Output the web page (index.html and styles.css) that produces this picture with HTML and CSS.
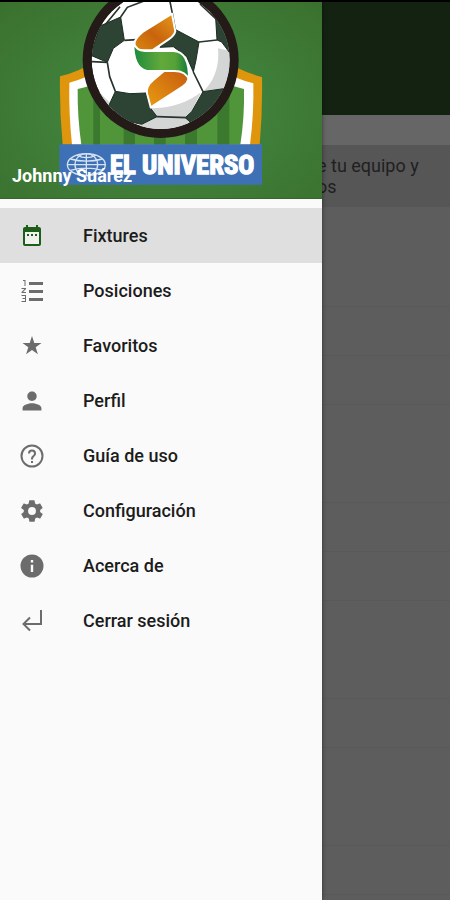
FILE: index.html
```
<!DOCTYPE html>
<html lang="es">
<head>
<meta charset="utf-8">
<meta name="viewport" content="width=device-width, initial-scale=1">
<title>Fixtures</title>
<link rel="stylesheet" href="styles.css">
</head>
<body>
<main class="page">
  <header class="app-bar"></header>
  <div class="tab-strip"></div>
  <p class="notice">e tu equipo y<br>os</p>
  <div class="matches">
    <div class="match"></div>
    <div class="day"></div>
    <div class="day"></div>
    <div class="match"></div>
    <div class="day"></div>
    <div class="day"></div>
    <div class="match"></div>
    <div class="day"></div>
    <div class="match"></div>
    <div class="day"></div>
  </div>
</main>

<aside class="drawer">
  <header class="profile">
    <svg class="crest" viewBox="177 6 612 549" role="img" aria-label="El Universo">
      <defs>
        <clipPath id="ball"><circle cx="482" cy="180" r="207"/></clipPath>
        <linearGradient id="amber" x1="0" y1="1" x2="1" y2="0">
          <stop offset="0" stop-color="#d9880f"/><stop offset=".45" stop-color="#c9640c"/><stop offset="1" stop-color="#e59a1c"/>
        </linearGradient>
        <linearGradient id="amber2" x1="0" y1="1" x2="1" y2="0">
          <stop offset="0" stop-color="#e99d10"/><stop offset="1" stop-color="#c65a10"/>
        </linearGradient>
        <linearGradient id="leaf">
          <stop offset="0" stop-color="#1c8a3e"/><stop offset=".5" stop-color="#62a93a"/><stop offset=".75" stop-color="#55a238"/><stop offset="1" stop-color="#147a3c"/>
        </linearGradient>
      </defs>
      <path fill="#df960d" d="M180 229Q240 215 290 180H675Q724 216 786 231Q788 330 779 434H188Q178 330 180 229Z"/>
      <path fill="#fff" d="M208 248Q255 236 300 210H665Q710 238 760 250Q762 340 750 434H216Q206 340 208 248Z"/>
      <path fill="#50953a" d="M233 267Q270 260 310 240H655Q700 260 732 267Q734 350 721 434H244Q232 350 233 267Z"/>
      <path fill="#3a792e" d="M280 250h20v184h-20zM371 300h34v134h-34zM462 300h35v134h-35zM555 300h36v134h-36zM652 250h36v184h-36z"/>
      <circle cx="482" cy="180" r="234" fill="#241a18"/>
      <g clip-path="url(#ball)">
        <circle cx="482" cy="180" r="207" fill="#fff"/>
        <path fill="#d4d5d5" d="M654 145L700 155L690 265L609 275Q661 225 654 145ZM603 277L565 352L470 350L454 325Q540 325 603 277ZM470 352L560 354L585 400H400L425 372ZM276 245Q300 285 345 320L340 340L270 270Z"/>
        <g fill="#2d4334" stroke="#1d2c23" stroke-width="3" stroke-linejoin="round">
          <path d="M300 78L362 51L373 121L340 145L322 187L270 165Z"/>
          <path d="M647 55L651 120L665 126L705 180L710 90Z"/>
          <path d="M525 88L597 126L588 180L580 216L560 170L520 140L480 142Z"/>
          <path d="M346 274L390 281L438 279L452 325L471 350L425 373L340 355L325 320Z"/>
          <path d="M609 275L685 264L670 330L590 385L556 353L575 335Z"/>
        </g>
        <g fill="none" stroke="#28342c" stroke-width="5">
          <path d="M362 51L382 22L440 0M509 0L516 35L526 90M373 121L410 119M597 126L651 120M580 216L609 275M322 187L329 230L346 274M470 350L560 353M276 185L322 187M315 75L360 20M651 60L600 12"/>
        </g>
      </g>
      <g stroke="#fff" stroke-width="6" stroke-linejoin="round">
        <path fill="url(#amber)" d="M516 41L526 94Q523 107 506 118L457 151H414Q387 130 428 96Z"/>
        <path fill="url(#amber2)" d="M492 213H562Q576 240 548 260L452 322L441 280Q437 259 460 240Z"/>
        <path fill="url(#leaf)" d="M400 126Q408 153 435 153H520Q568 153 567 240Q558 213 523 213H441Q399 204 400 126Z"/>
      </g>
      <path fill="#3e70b6" d="M178 433h608v121H178z"/>
      <g fill="none" stroke="#d5e3f4" stroke-width="4">
        <ellipse cx="259" cy="494" rx="57" ry="33"/>
        <ellipse cx="259" cy="494" rx="34" ry="33"/>
        <path d="M259 461v66M202 494h114M211 477Q259 490 307 477M211 511Q259 498 307 511M231 466Q259 480 287 466"/>
      </g>
      <text class="crest-title" x="330" y="523">EL UNIVERSO</text>
    </svg>
    <p class="user">Johnny Suárez</p>
  </header>
  <nav class="menu">
    <a class="item active" href="#fixtures"><svg viewBox="0 0 24 24"><path fill="#f0f2ee" d="M5 8h14v12H5z"/><path d="M19 3h-1V1h-2v2H8V1H6v2H5c-1.100 0-2 .9-2 2v15c0 1.100.9 2 2 2h14c1.100 0 2-.9 2-2V5c0-1.100-.9-2-2-2zm0 17H5V8h14v12zM7 10h2v2H7zm4 0h2v2h-2zm4 0h2v2h-2z"/></svg>Fixtures</a>
    <a class="item" href="#posiciones"><svg viewBox="0 0 24 24"><path d="M9 3h14v3H9zm0 8h14v3H9zm0 8h14v3H9zM3 1h2.500v6h-1V2H3zM1.500 9H6v1l-3 3h3v1H1.500v-1l3-3h-3zM1.500 16H6v7H1.500v-1H5v-2H2.500v-1H5v-2H1.500z"/></svg>Posiciones</a>
    <a class="item" href="#favoritos"><svg viewBox="0 0 24 24"><path d="M12 2l2.300 6.900h7.200l-5.800 4.300 2.200 7L12 16l-5.900 4.200 2.200-7-5.800-4.300h7.200z"/></svg>Favoritos</a>
    <a class="item" href="#perfil"><svg viewBox="0 0 24 24"><path d="M12 12c2.600 0 4.700-2.100 4.700-4.700S14.600 2.600 12 2.600 7.300 4.700 7.300 7.300 9.400 12 12 12zm0 2.300c-3.100 0-9.400 1.600-9.400 4.700v2.400h18.800V19c0-3.100-6.300-4.700-9.400-4.700z"/></svg>Perfil</a>
    <a class="item" href="#guia"><svg viewBox="0 0 24 24"><circle cx="12" cy="12" r="10.500" fill="none" stroke="currentColor" stroke-width="2"/><path d="M11 17h2v2h-2zM12 5.500a4 4 0 0 0-4 4h2a2 2 0 1 1 4 0c0 2-3 1.800-3 6h2c0-3 3-3.300 3-6a4 4 0 0 0-4-4z"/></svg>Guía de uso</a>
    <a class="item" href="#configuracion"><svg viewBox="1 1 22 22"><path d="M19.400 13c0-.3.100-.6.100-1s0-.7-.1-1l2.100-1.600c.2-.2.200-.4.100-.6l-2-3.500c-.1-.2-.4-.3-.6-.2l-2.500 1c-.5-.4-1.100-.7-1.700-1l-.4-2.600c0-.2-.2-.4-.5-.4h-4c-.3 0-.5.200-.5.400L9 5.100c-.6.200-1.200.6-1.700 1l-2.500-1c-.2-.1-.5 0-.6.200l-2 3.500c-.1.200-.1.500.1.600L4.500 11c0 .3-.1.700-.1 1s0 .7.100 1l-2.100 1.600c-.2.200-.3.400-.1.600l2 3.500c.1.200.4.300.6.200l2.500-1c.5.400 1.100.7 1.700 1l.4 2.600c0 .2.200.4.500.4h4c.3 0 .5-.2.500-.4l.4-2.600c.6-.3 1.200-.6 1.700-1l2.500 1c.2.100.5 0 .6-.2l2-3.500c.1-.2.100-.5-.1-.6L19.400 13zM12 15.600a3.600 3.600 0 1 1 0-7.200 3.600 3.600 0 0 1 0 7.200z"/></svg>Configuración</a>
    <a class="item" href="#acerca"><svg viewBox="0 0 24 24"><path fill-rule="evenodd" d="M12 .5a11.500 11.500 0 1 0 0 23 11.500 11.500 0 0 0 0-23zM10.800 6h2.400v2.400h-2.400zm0 4.800h2.400V18h-2.400z"/></svg>Acerca de</a>
    <a class="item" href="#salir"><svg viewBox="0 0 24 24"><path fill="none" stroke="currentColor" stroke-width="2" d="M21 1v14H4M10 8.500L3.500 15l6.500 6.500"/></svg>Cerrar sesión</a>
  </nav>
</aside>
</body>
</html>
```
FILE: styles.css
```
* {
  box-sizing: border-box;
}

body {
  margin: 0;
  min-height: 100vh;
  border-top: 2px solid #000;
  background: #5d5d5d;
  font-family: Roboto, "Liberation Sans", sans-serif;
  position: relative;
  overflow-x: hidden;
}

.app-bar {
  height: 113px;
  background: #142311;
}

.tab-strip {
  height: 30px;
  background: #666;
}

.notice {
  margin: 0;
  padding: 10px 12px 10px calc(100% - 133px);
  background: #565656;
  color: #1f1f1f;
  font-size: 18px;
  line-height: 21px;
}

.matches {
  padding-top: 2px;
}

.match,
.day {
  height: 49px;
  border-bottom: 1px solid #595959;
}

.match {
  height: 98px;
}

.drawer {
  position: absolute;
  top: 0;
  bottom: 0;
  left: 0;
  width: calc(100% - 128px);
  background: #fafafa;
  box-shadow: 0 0 4px rgba(0, 0, 0, 0.5);
}

.profile {
  position: relative;
  height: 197px;
  background: radial-gradient(ellipse at 50% 55%, #4a9440 0%, #40803a 45%, #3a702d 100%);
  border-bottom: 1px solid #35662a;
}

.crest {
  display: block;
  width: 204px;
  height: 183px;
  margin: 0 auto;
}

.crest-title {
  fill: #fff;
  stroke: #fff;
  stroke-width: 4px;
  font-family: "Roboto Condensed", "Open Sans Condensed", "Noto Sans Condensed", Roboto, sans-serif;
  font-size: 80px;
  font-weight: 700;
}

.user {
  position: absolute;
  left: 12px;
  bottom: 12px;
  margin: 0;
  color: #fff;
  font-size: 18px;
  font-weight: 700;
  line-height: 21px;
}

.menu {
  display: flex;
  flex-direction: column;
  padding-top: 9px;
}

.item {
  display: flex;
  align-items: center;
  gap: 39px;
  height: 55px;
  padding: 0 20px;
  color: #1c1c1c;
  font-size: 18px;
  font-weight: 500;
  text-decoration: none;
}

.item svg {
  width: 24px;
  height: 24px;
  color: #6c6c6c;
  fill: currentColor;
}

.item.active {
  background: #dfdfdf;
}

.item.active svg {
  color: #1d5e1b;
}
```
